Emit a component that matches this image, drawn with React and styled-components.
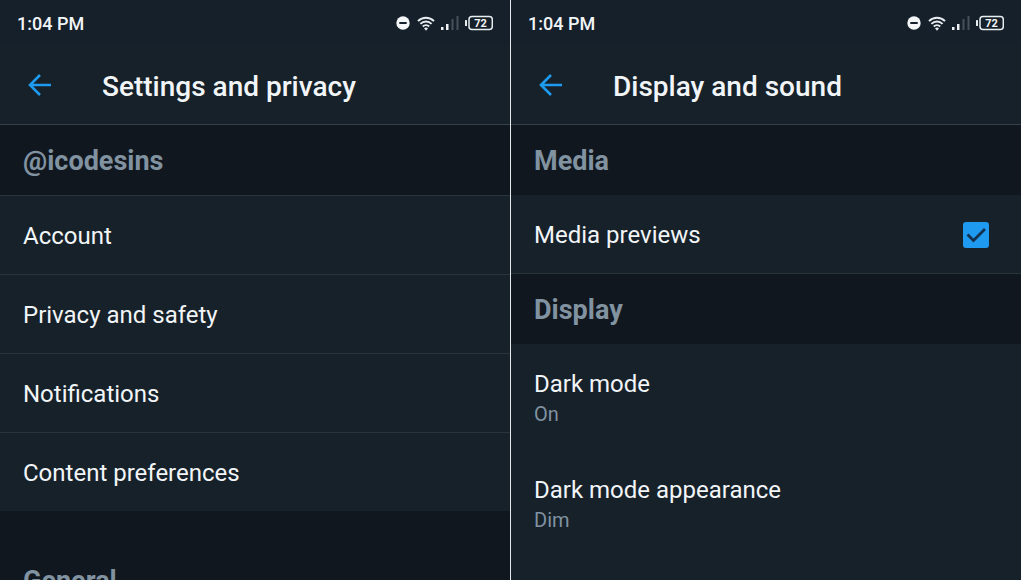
import React, { useId, useState } from "react";
import styled, { createGlobalStyle } from "styled-components";

const GlobalStyle = createGlobalStyle`
	:root {
		--surface: #16212a;
		--status: #15202a;
		--band: #10171f;
		--line: #28343c;
		--text: #f2f5f7;
		--muted: #8192a0;
		--accent: #1e9bf0;
	}

	*, *::before, *::after {
		box-sizing: border-box;
	}

	body {
		margin: 0;
		background: var(--band);
		color: var(--text);
		font-family: Roboto, "Liberation Sans", sans-serif;
	}
`;

const Screens = styled.div`
	display: grid;
	grid-template-columns: 1fr 1fr;
	gap: 1px;
	height: 100vh;
	overflow: hidden;
	background: #e6eaec;
`;

const Screen = styled.main`
	min-width: 0;
	overflow: hidden;
	background: ${({ $dark }) => ($dark ? "var(--band)" : "var(--surface)")};
`;

const StatusWrapper = styled.div`
	display: flex;
	align-items: center;
	justify-content: space-between;
	height: 46px;
	padding: 0 17px;
	background: var(--status);

	.time {
		font-size: 18px;
		font-weight: 500;
	}

	.indicators {
		display: flex;
		align-items: center;
		gap: 6px;
	}

	svg {
		display: block;
	}
`;

const Header = styled.header`
	display: flex;
	align-items: center;
	gap: 48px;
	height: 79px;
	padding: 4px 26px 0;
	background: var(--surface);
	border-bottom: 1px solid #35414a;

	h1 {
		margin: 0;
		font-size: 28px;
		font-weight: 500;
		line-height: 32px;
		white-space: nowrap;
	}
`;

const BackButton = styled.button`
	display: flex;
	padding: 0;
	border: 0;
	background: none;
	color: var(--accent);
	cursor: pointer;
`;

const SectionTitle = styled.h2`
	margin: 0;
	padding: ${({ $spaced }) => ($spaced ? "55px 23px 19px" : "21px 23px 19px")};
	background: var(--band);
	color: var(--muted);
	font-size: 27px;
	font-weight: 700;
	line-height: 30px;
`;

const LinkList = styled.ul`
	margin: 0;
	padding: 0;
	list-style: none;
	background: var(--surface);

	li {
		border-top: 1px solid var(--line);
	}
`;

const RowLink = styled.a`
	display: block;
	padding: 25px 23px 23px;
	color: inherit;
	font-size: 24px;
	line-height: 30px;
	text-decoration: none;
`;

const CheckRow = styled.label`
	display: flex;
	align-items: center;
	justify-content: space-between;
	padding: 25px 32px 23px 23px;
	border-bottom: 1px solid var(--line);
	font-size: 24px;
	line-height: 30px;
	cursor: pointer;
`;

const CheckBox = styled.span`
	display: grid;
	width: 26px;
	height: 26px;

	input,
	svg {
		grid-area: 1 / 1;
		width: 26px;
		height: 26px;
		margin: 0;
	}

	input {
		appearance: none;
		border: 2px solid var(--muted);
		border-radius: 3px;
		cursor: pointer;
	}

	input:checked {
		border-color: var(--accent);
		background: var(--accent);
	}

	svg {
		pointer-events: none;
	}

	input:not(:checked) + svg {
		visibility: hidden;
	}
`;

const OptionButton = styled.button`
	display: block;
	width: 100%;
	padding: 25px 23px 21px;
	border: 0;
	background: none;
	color: inherit;
	font-family: inherit;
	text-align: left;
	cursor: pointer;

	.label {
		display: block;
		font-size: 24px;
		line-height: 30px;
	}

	.value {
		display: block;
		color: var(--muted);
		font-size: 20px;
		line-height: 30px;
	}
`;

const WifiIcon = () => (
	<svg width="18" height="15" viewBox="0 0 18 15" fill="none" stroke="#e8edf0" strokeWidth="1.9">
		<path d="M1 5.2C5.5.6 12.5.6 17 5.2" />
		<path d="M3.4 7.9C6.6 4.7 11.4 4.7 14.6 7.9" />
		<path d="M5.8 10.5C7.6 8.7 10.4 8.7 12.2 10.5" />
		<path d="M9 14.800 7 12.300Q9 10.900 11 12.300Z" fill="#e8edf0" stroke="none" />
	</svg>
);

const SignalIcon = () => (
	<svg width="18" height="16" viewBox="0 0 18 16">
		<rect x="0" y="12" width="2.500" height="3" fill="#eef2f4" />
		<rect x="5" y="9" width="2.500" height="6" fill="#eef2f4" />
		<rect x="10.500" y="4" width="2" height="11" fill="#46515a" />
		<rect x="15.500" y="1" width="2" height="14" fill="#46515a" />
	</svg>
);

const DndIcon = () => (
	<svg width="16" height="16" viewBox="0 0 16 16">
		<circle cx="8" cy="8" r="6.700" fill="#f4f6f7" />
		<rect x="4.300" y="7" width="7.400" height="2" fill="#15202a" />
	</svg>
);

const BatteryIcon = () => (
	<svg width="28" height="16" viewBox="0 0 28 16">
		<rect x="0" y="5" width="2" height="6" rx="0.500" fill="#e8edf0" />
		<rect x="4" y="1.500" width="23.300" height="13" rx="3" fill="none" stroke="#e8edf0" strokeWidth="1.500" />
		<text x="15.600" y="12" fill="#f4f6f7" fontSize="11" fontWeight="700" textAnchor="middle">
			72
		</text>
	</svg>
);

const StatusBar = () => (
	<StatusWrapper>
		<span className="time">1:04 PM</span>
		<div className="indicators">
			<DndIcon />
			<WifiIcon />
			<SignalIcon />
			<BatteryIcon />
		</div>
	</StatusWrapper>
);

const TopBar = ({ title }) => (
	<Header>
		<BackButton type="button" aria-label="Back">
			<svg width="28" height="28" viewBox="0 0 28 28" fill="none" stroke="currentColor" strokeWidth="2.600">
				<path d="M25 12H4M14 2 4 12 14 22" />
			</svg>
		</BackButton>
		<h1>{title}</h1>
	</Header>
);

const accountLinks = ["Account", "Privacy and safety", "Notifications", "Content preferences"];

const displayOptions = [
	{ label: "Dark mode", value: "On" },
	{ label: "Dark mode appearance", value: "Dim" },
];

const SettingsScreen = () => (
	<Screen $dark>
		<StatusBar />
		<TopBar title="Settings and privacy" />
		<SectionTitle>@icodesins</SectionTitle>
		<LinkList>
			{accountLinks.map((item) => (
				<li key={item}>
					<RowLink href="#">{item}</RowLink>
				</li>
			))}
		</LinkList>
		<SectionTitle $spaced>General</SectionTitle>
	</Screen>
);

const DisplayScreen = () => {
	const [previews, setPreviews] = useState(true);
	const previewsId = useId();

	return (
		<Screen>
			<StatusBar />
			<TopBar title="Display and sound" />
			<SectionTitle>Media</SectionTitle>
			<CheckRow htmlFor={previewsId}>
				Media previews
				<CheckBox>
					<input
						id={previewsId}
						type="checkbox"
						checked={previews}
						onChange={(e) => setPreviews(e.target.checked)}
					/>
					<svg viewBox="0 0 26 26" fill="none" stroke="#15304d" strokeWidth="2.800">
						<path d="M4.500 12.500 10.500 18.500 22 7" />
					</svg>
				</CheckBox>
			</CheckRow>
			<SectionTitle>Display</SectionTitle>
			{displayOptions.map(({ label, value }) => (
				<OptionButton key={label} type="button">
					<span className="label">{label}</span>
					<span className="value">{value}</span>
				</OptionButton>
			))}
		</Screen>
	);
};

export default function App() {
	return (
		<>
			<GlobalStyle />
			<Screens>
				<SettingsScreen />
				<DisplayScreen />
			</Screens>
		</>
	);
}
